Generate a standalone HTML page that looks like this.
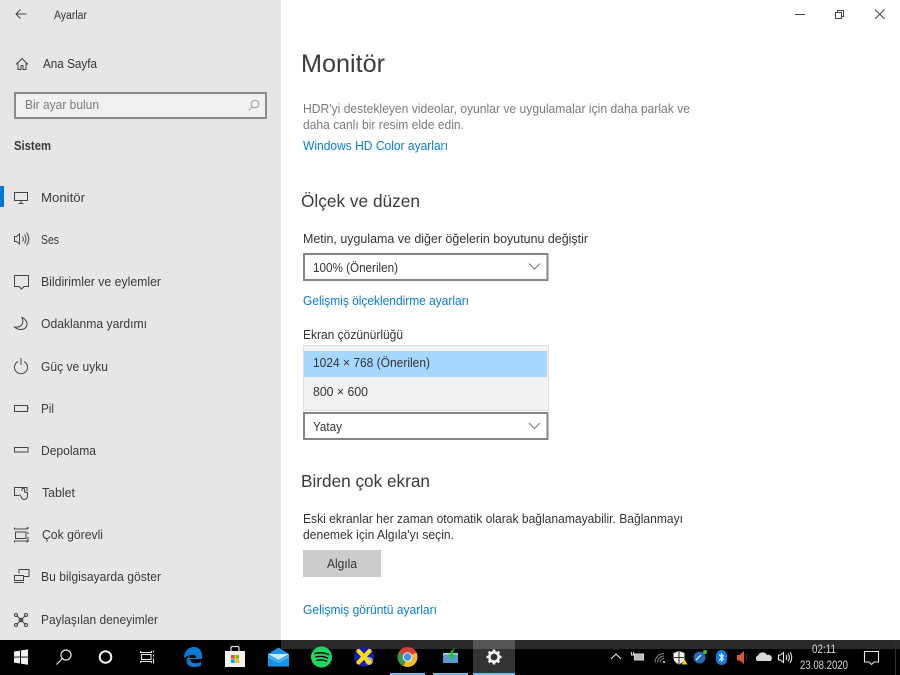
<!DOCTYPE html>
<html lang="tr"><head><meta charset="utf-8"><title>Ayarlar</title>
<style>
html,body{margin:0;padding:0;width:900px;height:675px;overflow:hidden;background:#fff}
svg{display:block;filter:blur(.35px)}
text{font-family:"Liberation Sans",sans-serif;font-size:13px;fill:#333}
.m{fill:#3a3a3a}
.l{fill:#0a7cd8}
.g{fill:#7a7a7a}
.i{fill:none;stroke:#444;stroke-width:1}
.w{fill:none;stroke:#e8e8e8;stroke-width:1.1}
</style></head><body>
<svg width="900" height="675" viewBox="0 0 900 675" xmlns="http://www.w3.org/2000/svg">
<rect width="900" height="675" fill="#fff"/>
<rect width="281" height="640" fill="#e6e6e6"/>

<!-- sidebar header -->
<path class="i" d="M26.500 14H16M20.500 9.500L16 14l4.500 4.500"/>
<text x="54" y="19" style="font-size:11.500px" textLength="33" lengthAdjust="spacingAndGlyphs">Ayarlar</text>
<path class="i" d="M16 64.500l6-6 6 6M18 63v6.500h3v-4h2v4h3V63"/>
<text x="43" y="68" textLength="54" lengthAdjust="spacingAndGlyphs">Ana Sayfa</text>

<!-- search -->
<rect x="15" y="93" width="251" height="25" fill="#f0f0f0" stroke="#8a8a8a" stroke-width="2"/>
<text x="25" y="109" class="g" textLength="74" lengthAdjust="spacingAndGlyphs">Bir ayar bulun</text>
<circle cx="255" cy="104" r="3.800" fill="none" stroke="#999"/><path d="M252.300 106.800l-3.500 3.500" stroke="#999" fill="none"/>
<text x="14" y="150" font-weight="bold" style="fill:#3a3a3a;font-size:12.500px" textLength="37" lengthAdjust="spacingAndGlyphs">Sistem</text>

<!-- nav -->
<rect x="0" y="186" width="4" height="21" fill="#0078d7"/>
<g class="i">
<path d="M14.500 192.500h13v8h-13zM18.500 203.500h5M21 200.500v3"/>
<path d="M14.500 236.500v5h2l3 2.500v-10l-3 2.500zM22.500 236.500q1.500 2.500 0 5M24.500 234.500q3 4.500 0 9M26.500 232.500q4.500 6.500 0 13"/>
<path d="M14.500 275.500h14v11h-4.500l-2.500 2.500-2.500-2.500h-4.500z"/>
<path d="M22 317.500c3 1.500 5 4 5 6.500 0 3.500-3 5.500-6 5.500-3 0-5-1-6.500-2.500 3.500.5 6.500-.5 7.800-3 1-2.200 .5-4.500-.3-6.500z"/>
<path d="M18 361.500a6.500 6.500 0 1 0 6 0M21 358v7"/>
<path d="M14.500 405.500h13v6h-13zM28 408h1"/>
<path d="M14.500 447.500h13.500v4.500h-13.500z"/>
<path d="M19 495.500h-4.500v-8h12.500v4M22 491v-1.500a1.300 1.300 0 0 1 2.600 0v2.500l2.900.8v3.200a3.200 3.200 0 0 1-6.400.5l-1.600-2"/>
<path d="M14.500 527.500v1.500h12.500v-1.500M14.500 542.500v-1.500h12.500v1.500M15.500 532h10.500v6.500h-10.500zM28 527v2M28 532v2M28 537v5"/>
<path d="M19 573.500v-4h10v7h-5M14.500 575.500h9v5h-9zM14 582.500h10"/>
<path d="M16.500 615.500l9 9M25.500 615.500l-9 9"/><circle cx="16" cy="615" r="1.500"/><circle cx="26" cy="615" r="1.500"/><circle cx="16" cy="625" r="1.500"/><circle cx="26" cy="625" r="1.500"/><circle cx="21" cy="620" r="1.800"/>
</g>
<text class="m" x="41" y="202" textLength="44" lengthAdjust="spacingAndGlyphs">Monitör</text>
<text class="m" x="41" y="244" textLength="18" lengthAdjust="spacingAndGlyphs">Ses</text>
<text class="m" x="41" y="286" textLength="120" lengthAdjust="spacingAndGlyphs">Bildirimler ve eylemler</text>
<text class="m" x="41" y="328" textLength="106" lengthAdjust="spacingAndGlyphs">Odaklanma yardımı</text>
<text class="m" x="41" y="371" textLength="67" lengthAdjust="spacingAndGlyphs">Güç ve uyku</text>
<text class="m" x="41" y="413" textLength="13" lengthAdjust="spacingAndGlyphs">Pil</text>
<text class="m" x="41" y="455" textLength="55" lengthAdjust="spacingAndGlyphs">Depolama</text>
<text class="m" x="42" y="497" textLength="33" lengthAdjust="spacingAndGlyphs">Tablet</text>
<text class="m" x="42" y="539" textLength="61" lengthAdjust="spacingAndGlyphs">Çok görevli</text>
<text class="m" x="41" y="581" textLength="120" lengthAdjust="spacingAndGlyphs">Bu bilgisayarda göster</text>
<text class="m" x="41" y="624" textLength="117" lengthAdjust="spacingAndGlyphs">Paylaşılan deneyimler</text>

<!-- window controls -->
<path d="M795 14.500h10" stroke="#444" fill="none"/>
<path d="M835.500 12.500h6v6h-6zM837.500 12.500v-2h6v6h-2" stroke="#444" fill="none"/>
<path d="M875 9.500l9.500 9.500M884.500 9.500l-9.500 9.500" stroke="#444" fill="none"/>

<!-- main -->
<text x="301" y="72" style="font-size:25px;fill:#3c3c3c" textLength="84" lengthAdjust="spacingAndGlyphs">Monitör</text>
<text x="303" y="113" class="g" textLength="387" lengthAdjust="spacingAndGlyphs">HDR'yi destekleyen videolar, oyunlar ve uygulamalar için daha parlak ve</text>
<text x="303" y="129" class="g" textLength="161" lengthAdjust="spacingAndGlyphs">daha canlı bir resim elde edin.</text>
<text x="303" y="150" class="l" textLength="145" lengthAdjust="spacingAndGlyphs">Windows HD Color ayarları</text>
<text x="301" y="207" style="font-size:17.500px;fill:#3a3a3a" textLength="119" lengthAdjust="spacingAndGlyphs">Ölçek ve düzen</text>
<text x="303" y="243" textLength="285" lengthAdjust="spacingAndGlyphs">Metin, uygulama ve diğer öğelerin boyutunu değiştir</text>

<rect x="304" y="254" width="243.500" height="26" fill="#fff" stroke="#858585" stroke-width="2"/>
<text x="313" y="272" textLength="85" lengthAdjust="spacingAndGlyphs">100% (Önerilen)</text>
<path d="M529 263.500l5.500 5.500 5.500-5.500" fill="none" stroke="#777"/>
<text x="303" y="305" class="l" textLength="166" lengthAdjust="spacingAndGlyphs">Gelişmiş ölçeklendirme ayarları</text>
<text x="303" y="339" textLength="100" lengthAdjust="spacingAndGlyphs">Ekran çözünürlüğü</text>

<rect x="303.500" y="345.500" width="245" height="65" fill="#f2f2f2" stroke="#ddd"/>
<rect x="304" y="351" width="243" height="26" fill="#a6d8ff"/>
<text x="313" y="367" textLength="117" lengthAdjust="spacingAndGlyphs">1024 × 768 (Önerilen)</text>
<text x="313" y="396" textLength="55" lengthAdjust="spacingAndGlyphs">800 × 600</text>

<rect x="304" y="413" width="243.500" height="26" fill="#fff" stroke="#858585" stroke-width="2"/>
<text x="313" y="431" textLength="29" lengthAdjust="spacingAndGlyphs">Yatay</text>
<path d="M529 423l5.500 5.500 5.500-5.500" fill="none" stroke="#777"/>

<text x="301" y="487" style="font-size:17.500px;fill:#3a3a3a" textLength="129" lengthAdjust="spacingAndGlyphs">Birden çok ekran</text>
<text x="303" y="523" textLength="380" lengthAdjust="spacingAndGlyphs">Eski ekranlar her zaman otomatik olarak bağlanamayabilir. Bağlanmayı</text>
<text x="303" y="539" textLength="151" lengthAdjust="spacingAndGlyphs">denemek için Algıla'yı seçin.</text>
<rect x="303" y="550" width="78" height="27" fill="#ccc"/>
<text x="327" y="568" textLength="30" lengthAdjust="spacingAndGlyphs">Algıla</text>
<text x="303" y="614" class="l" textLength="134" lengthAdjust="spacingAndGlyphs">Gelişmiş görüntü ayarları</text>

<!-- taskbar -->
<rect y="640" width="900" height="35" fill="#000"/>
<rect x="281" y="640" width="619" height="9" fill="#2a2a2a"/>
<rect x="473" y="640" width="42" height="35" fill="#333"/>
<rect x="473" y="640" width="42" height="9" fill="#555"/>
<rect x="895" y="640" width="1" height="35" fill="#2f2f2f"/>
<rect x="390" y="673" width="35" height="2" fill="#76b9ed"/>
<rect x="433" y="673" width="35" height="2" fill="#76b9ed"/>
<rect x="473" y="673" width="42" height="2" fill="#76b9ed"/>

<!-- start -->
<path d="M14 651.500l6-.9v6h-6zM21 650.400l7-1v7.200h-7zM14 657.500h6v6l-6-.9zM21 657.500h7v7.200l-7-1z" fill="#f2f2f2"/>
<!-- search -->
<circle cx="66" cy="655" r="5" fill="none" stroke="#e8e8e8" stroke-width="1.200"/><path d="M62.500 658.500l-6 6" stroke="#e8e8e8" stroke-width="1.200"/>
<!-- cortana -->
<circle cx="105.500" cy="657" r="5.800" fill="none" stroke="#f2f2f2" stroke-width="2"/>
<!-- task view -->
<path class="w" d="M140.500 651v1.500h11V651M140.500 663v-1.500h11v1.500M141.500 654.500h9.500v5h-9.500zM153.500 650.500v2M153.500 654.500v2M153.500 658.500v5"/>
<!-- edge -->
<path d="M184 658c0-6.500 4-11 10-11 5.500 0 8 4 8 9v3h-12c.2 3 2.800 4.200 5.500 4.200 2.200 0 4-.5 5.500-1.300v3.600c-1.800 1-4 1.500-6.500 1.500-4.500 0-7.500-2-7.800-5.500-.2-2.500 1-5 3.800-6.500-.8 1-1.300 2-1.500 3h7c0-2-1-3.200-3-3.200-3.500 0-6.500 1.500-9 3.200z" fill="#0a78d6"/>
<!-- store -->
<rect x="225" y="651" width="20" height="16" fill="#f2f2f2"/>
<path d="M231 651v-3q0-1.500 1.500-1.500h5q1.500 0 1.500 1.500v3" fill="none" stroke="#ddd" stroke-width="1.200"/>
<rect x="231" y="655" width="3.700" height="3.700" fill="#f25022"/><rect x="235.300" y="655" width="3.700" height="3.700" fill="#7fba00"/><rect x="231" y="659.300" width="3.700" height="3.700" fill="#00a4ef"/><rect x="235.300" y="659.300" width="3.700" height="3.700" fill="#ffb900"/>
<!-- mail -->
<path d="M268 654l10.500-6.500 10.500 6.500v12.500h-21z" fill="#1a93e6"/>
<path d="M268 654h21l-10.500 6z" fill="#c9ebfb"/><path d="M268 655l10.500 6 10.500-6v2.500l-10.500 5.500-10.500-5.500z" fill="#4cb6f0"/>
<!-- spotify -->
<circle cx="321.500" cy="657" r="10.500" fill="#1ed760"/>
<path d="M315 653.500q7-2 13.500 1M316 657q6-1.600 11.500 1M317 660.300q5-1.200 9.500 .8" fill="none" stroke="#111" stroke-width="1.500" stroke-linecap="round"/>
<!-- X -->
<circle cx="364" cy="656.500" r="10" fill="#1b1ea8"/><circle cx="369" cy="661" r="4" fill="#9a9ad8"/>
<path d="M358.500 651l11 11.500M369.500 651l-11 11.500" stroke="#f5dc1e" stroke-width="4.200" stroke-linecap="round"/>
<!-- chrome -->
<circle cx="407.500" cy="657" r="10" fill="#d9402f"/>
<path d="M407.500 657l-8.700-5a10 10 0 0 0 5 14.300z" fill="#3a9a4a"/>
<path d="M407.500 657l8.900-4.500a10 10 0 0 1-8.900 14.500l-4-.8z" fill="#f2bc33"/>
<circle cx="407.500" cy="657" r="4.800" fill="#eee"/><circle cx="407.500" cy="657" r="3.700" fill="#4a8df0"/>
<!-- app -->
<rect x="443" y="653" width="15" height="10" fill="#5b9bd0"/><rect x="443" y="653" width="15" height="2" fill="#9cc4e0"/>
<path d="M455 648l-4.500 3.500v3h-2.500l3.500 5 3.500-5h-2v-2.500z" fill="#18c92e"/>
<!-- gear -->
<circle cx="494" cy="657" r="4.700" fill="none" stroke="#f5f5f5" stroke-width="2.600"/>
<path d="M494 649.500v3M494 661.500v3M486.500 657h3M498.500 657h3M488.700 651.700l2.100 2.100M497.200 660.200l2.100 2.100M499.300 651.700l-2.100 2.100M490.800 660.200l-2.100 2.100" stroke="#f5f5f5" stroke-width="2.600"/>

<!-- tray -->
<path class="w" d="M611 659l5-5 5 5"/>
<path d="M634.500 654h9v6h-9z" fill="#bbb" stroke="#ddd"/><path d="M631.500 652v3M633.500 652v3M631 655h3" stroke="#ddd" fill="none"/>
<path d="M655 662.500a9 9 0 0 1 9-9M657.500 662.500a6.500 6.500 0 0 1 6.500-6.500M660 662.500a4 4 0 0 1 4-4" stroke="#8a8a8a" fill="none"/><circle cx="664" cy="662" r="1" fill="#ddd"/>
<path d="M679 651l5.500 2v5q0 4-5.500 6.500-5.500-2.500-5.500-6.500v-5z" fill="#eee"/><path d="M679 651v13M674 657.500h10" stroke="#333"/>
<path d="M681.500 664.500l3-5.500 3 5.500z" fill="#f7c51e"/>
<circle cx="699.500" cy="657.500" r="6" fill="#2468b8"/><path d="M696 660l5-5" stroke="#dde" stroke-width="1.500"/><circle cx="705" cy="652" r="2" fill="#3bc43b"/>
<rect x="716" y="650" width="11" height="15" rx="5.500" fill="#0a7fe6"/>
<path d="M719 654.500l4.500 4.500-2.200 2.200v-7.400l2.200 2.200-4.500 4.500" fill="none" stroke="#fff" stroke-width=".9"/>
<path d="M737 655h2.500l4.500-4v13l-4.500-3.500h-2.500z" fill="#d2593c"/><path d="M746 654q1.500 3.500 0 7" stroke="#5a2a20" fill="none"/>
<path d="M757.500 661a3 3 0 0 1 .5-5.500 5 5 0 0 1 9-.5 3.500 3.500 0 0 1 3.500 6z" fill="#d8d8d8"/>
<path class="w" d="M778.500 655v5h2l3 2.500v-10l-3 2.500zM786 655q1.500 2.500 0 5M788 653.500q2.700 4 0 8M790 652q3.500 5.500 0 11"/>
<text x="812" y="653" style="font-size:12px;fill:#d8d8d8" textLength="24" lengthAdjust="spacingAndGlyphs">02:11</text>
<text x="800" y="669" style="font-size:12px;fill:#d8d8d8" textLength="48" lengthAdjust="spacingAndGlyphs">23.08.2020</text>
<path class="w" d="M864.500 651.500h14v10.500h-4.500l-2.500 2.500-2.500-2.500h-4.500z"/>
</svg>
</body></html>
